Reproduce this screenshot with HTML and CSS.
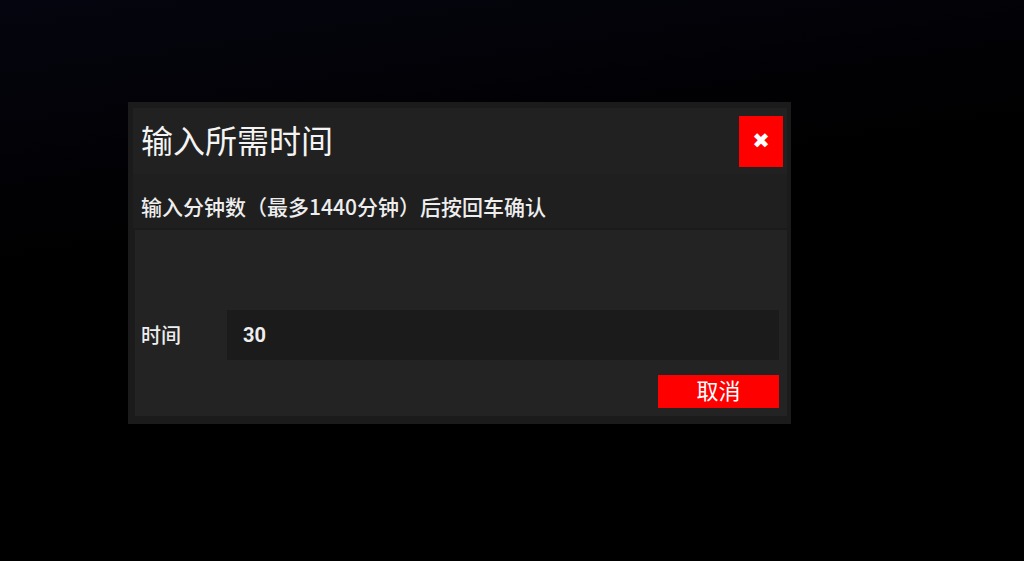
FILE: index.html
```html
<!DOCTYPE html>
<html lang="zh-CN">
<head>
<meta charset="utf-8">
<title>输入所需时间</title>
<link rel="stylesheet" href="styles.css">
</head>
<body>
<div class="screen">
  <div class="dialog">
    <div class="header">
      <div class="title">输入所需时间</div>
      <button class="close" type="button">&#x2716;</button>
    </div>
    <div class="subtitle">输入分钟数（最多1440分钟）后按回车确认</div>
    <div class="body">
      <div class="field">
        <span class="label">时间</span>
        <div class="input">30</div>
      </div>
      <div class="actions">
        <button class="cancel" type="button">取消</button>
      </div>
    </div>
  </div>
</div>
</body>
</html>
```

FILE: styles.css
```css
html, body {
  margin: 0;
  padding: 0;
}
body {
  width: 1024px;
  height: 561px;
  overflow: hidden;
  background: linear-gradient(172deg, #05050f 0%, #020207 20%, #000000 40%, #000000 100%);
  font-family: "Noto Sans CJK SC", "Noto Sans", sans-serif;
  color: #f2f2f2;
}
.screen {
  box-sizing: border-box;
  height: 561px;
  padding: 102px 0 0 128px;
  display: flex;
  align-items: flex-start;
}
.dialog {
  box-sizing: border-box;
  width: 663px;
  padding: 6px 4px 8px 5px;
  background: #1b1b1b;
  display: flex;
  flex-direction: column;
}
.header {
  height: 66px;
  background: #212121;
  display: flex;
  align-items: center;
  justify-content: space-between;
  padding: 0 4px 0 8px;
}
.title {
  font-size: 32px;
  line-height: 1;
  font-weight: 400;
  color: #f4f4f4;
  margin-top: -4px;
}
.close {
  width: 44px;
  height: 51px;
  border: 0;
  padding: 0;
  margin-top: 1px;
  background: #ff0000;
  color: #ffffff;
  font-size: 21px;
  line-height: 1;
  font-family: "DejaVu Sans", sans-serif;
  font-weight: 700;
  display: flex;
  align-items: center;
  justify-content: center;
}
.subtitle {
  box-sizing: border-box;
  height: 54px;
  display: flex;
  align-items: center;
  padding: 10px 0 0 8px;
  background: #1f1f1f;
  font-size: 21px;
  font-weight: 500;
  color: #eeeeee;
}
.body {
  margin: 2px 0 0 2px;
  height: 186px;
  background: #232323;
  box-sizing: border-box;
  padding: 80px 8px 8px 6px;
  display: flex;
  flex-direction: column;
  gap: 15px;
}
.field {
  display: flex;
  align-items: center;
  height: 50px;
}
.label {
  width: 86px;
  font-size: 20px;
  font-weight: 500;
  color: #eeeeee;
  margin-top: -2px;
}
.input {
  flex: 1;
  height: 50px;
  background: #1b1b1b;
  display: flex;
  align-items: center;
  padding-left: 16px;
  font-family: Roboto, "Liberation Sans", sans-serif;
  font-weight: 700;
  font-size: 20px;
  color: #eeeeee;
}
.actions {
  display: flex;
  justify-content: flex-end;
}
.cancel {
  width: 121px;
  height: 33px;
  border: 0;
  padding: 0 0 5px 0;
  background: #ff0000;
  color: #ffffff;
  font-family: "Noto Sans CJK SC", sans-serif;
  font-size: 22px;
  line-height: 1;
}
```
